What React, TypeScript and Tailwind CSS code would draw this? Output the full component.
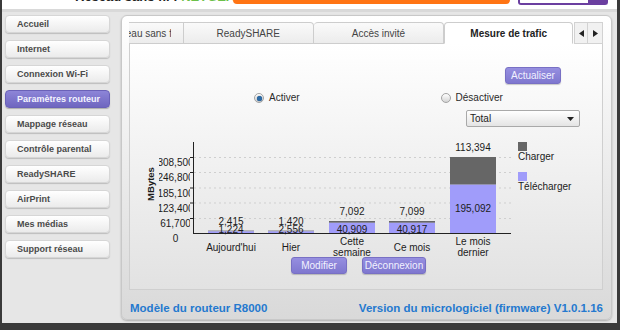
import React from 'react'

const MENU = [
  'Accueil',
  'Internet',
  'Connexion Wi-Fi',
  'Paramètres routeur',
  'Mappage réseau',
  'Contrôle parental',
  'ReadySHARE',
  'AirPrint',
  'Mes médias',
  'Support réseau',
]

// y-axis ticks (page coords), 15px per 61,700
const TICKS = [
  { y: 157.5, label: '308,500' },
  { y: 172.5, label: '246,800' },
  { y: 188, label: '185,100' },
  { y: 203, label: '123,400' },
  { y: 218.5, label: '61,700' },
]

const BARS = [
  { x: 208, up: 0.8, down: 1.6, upLabel: '2,415', downLabel: '1,224', upY: 225, downY: 232.5, cat: ["Aujourd'hui"] },
  { x: 268, up: 0.8, down: 1.6, upLabel: '1,420', downLabel: '2,556', upY: 225, downY: 232.5, cat: ['Hier'] },
  { x: 329, up: 1.8, down: 10.2, upLabel: '7,092', downLabel: '40,909', upY: 215, downY: 233, cat: ['Cette', 'semaine'] },
  { x: 389, up: 1.8, down: 10.2, upLabel: '7,099', downLabel: '40,917', upY: 215, downY: 233, cat: ['Ce mois'] },
  { x: 450, up: 27.7, down: 48.3, upLabel: '113,394', downLabel: '195,092', upY: 151, downY: 212, cat: ['Le mois', 'dernier'] },
]

function Chart() {
  return (
    <svg width="472" height="122" className="block" style={{ fontFamily: '"Liberation Sans", Arial, sans-serif' }}>
      <defs>
        <clipPath id="ylabels">
          <rect x="159" y="140" width="31" height="110" />
        </clipPath>
      </defs>
      <g transform="translate(-130,-135)" fontSize="10" fill="#1c1c1c">
        {/* grid */}
        {TICKS.map((t) => (
          <line key={t.y} x1="194" x2="511" y1={t.y} y2={t.y} stroke="#cfcfcf" strokeDasharray="2 3" />
        ))}
        {/* axes */}
        <line x1="193.5" x2="193.5" y1="142" y2="233.5" stroke="#222" />
        <line x1="193" x2="511" y1="233.5" y2="233.5" stroke="#222" />
        {TICKS.map((t) => (
          <line key={'t' + t.y} x1="190" x2="193" y1={t.y} y2={t.y} stroke="#222" />
        ))}
        <g clipPath="url(#ylabels)">
          {TICKS.map((t) => (
            <text key={'l' + t.y} x="175.5" y={t.y + 8.5} textAnchor="middle">
              {t.label}
            </text>
          ))}
        </g>
        <text x="175.5" y="242" textAnchor="middle">0</text>
        <text transform="translate(154,184) rotate(-90)" textAnchor="middle" fontWeight="bold" fontSize="9.5">
          MBytes
        </text>

        {/* bars */}
        {BARS.map((b) => {
          const downTop = 233 - b.down
          const upTop = downTop - b.up
          const cx = b.x + 23
          return (
            <g key={b.x}>
              <rect x={b.x} y={upTop} width="46" height={b.up} fill="#666666" />
              <rect x={b.x} y={downTop} width="46" height={b.down} fill="#a09cfa" />
              <text x={cx} y={b.upY} textAnchor="middle">{b.upLabel}</text>
              <text x={cx} y={b.downY} textAnchor="middle">{b.downLabel}</text>
              {b.cat.length === 1 ? (
                <text x={cx} y="251" textAnchor="middle">{b.cat[0]}</text>
              ) : (
                <>
                  <text x={cx} y="244.5" textAnchor="middle">{b.cat[0]}</text>
                  <text x={cx} y="256" textAnchor="middle">{b.cat[1]}</text>
                </>
              )}
            </g>
          )
        })}

        {/* legend */}
        <rect x="518" y="142" width="9" height="9" fill="#666666" />
        <text x="518" y="159.5">Charger</text>
        <rect x="518" y="172" width="9" height="9" fill="#a09cfa" />
        <text x="518" y="189.5">Télécharger</text>
      </g>
    </svg>
  )
}

function Radio({ checked, label }: { checked?: boolean; label: string }) {
  return (
    <div className="flex items-center gap-[5px]">
      <div className="w-[10px] h-[10px] rounded-full border border-[#a3a3a3] bg-gradient-to-b from-white to-[#d4d4d4] flex items-center justify-center">
        {checked && <div className="w-[5px] h-[5px] rounded-full bg-[#2b6aa6] shadow-[0_0_1px_#0d3a66]" />}
      </div>
      <span className="text-[10px] leading-[10px] text-[#2a2a2a]">{label}</span>
    </div>
  )
}

function PurpleButton({ label, width }: { label: string; width: string }) {
  return (
    <div
      className={`${width} h-[17px] rounded-[3px] border border-[#7870c4] bg-gradient-to-b from-[#968fe0] to-[#7f77cf] text-[10px] leading-[15px] text-center text-[#f2f2ff] shadow-[0_1px_1px_rgba(0,0,0,0.2)]`}
    >
      {label}
    </div>
  )
}

export default function App() {
  return (
    <div className="w-[620px] h-[330px] bg-[#3a3a3a] overflow-hidden font-['Liberation_Sans',Arial,sans-serif]">
      <div className="ml-[2px] mr-[3px] h-[323px] flex flex-col bg-[#e6e6e6]">
        {/* top strip, mostly scrolled out of view */}
        <div className="h-[9px] bg-white flex items-start overflow-hidden shrink-0">
          <div className="w-[231px] pl-[73px] mt-[-10px] text-[13px] leading-[13px] font-bold whitespace-nowrap overflow-hidden">
            <span className="text-[#222]">Réseau sans fil : </span>
            <span className="text-[#6cc04a]">NETGEAR</span>
          </div>
          <div className="w-[277px] h-[4px] rounded-b-[6px] bg-[#ff7414]" />
          <div className="ml-[8px] w-[90px] h-[5px] rounded-b-[3px] border-2 border-t-0 border-[#6b3fa0] bg-white flex justify-end">
            <div className="w-[18px] bg-[#6b3fa0]" />
          </div>
        </div>

        <div className="flex-1 flex border-t-[3px] border-[#d9d9d9] pt-[3px]">
          {/* sidebar */}
          <div className="w-[119px] pl-[3px] pr-[11px] flex flex-col gap-[7px]">
            {MENU.map((item) => {
              const active = item === 'Paramètres routeur'
              return (
                <div
                  key={item}
                  className={
                    active
                      ? 'h-[18px] rounded-[4px] border border-[#6a61b8] bg-gradient-to-b from-[#8d85d8] to-[#6f66c0] pl-[11px] text-[9px] leading-[16px] font-bold text-[#f4f4ff] shadow-[0_1px_1px_rgba(0,0,0,0.25)]'
                      : 'h-[18px] rounded-[4px] border border-[#d6d6d6] bg-gradient-to-b from-white to-[#ebebeb] pl-[11px] text-[9px] leading-[16px] font-bold text-[#4a4a4a] shadow-[0_1px_1px_rgba(0,0,0,0.18)]'
                  }
                >
                  {item}
                </div>
              )
            })}
          </div>

          {/* main panel */}
          <div className="w-[491px] h-[305px] rounded-[6px] border border-[#c8c8c8] bg-gradient-to-b from-white to-[#d9d9d9] shadow-[0_1px_2px_rgba(0,0,0,0.25)] pt-[6px] pl-[7px] pr-[8px] flex flex-col">
            {/* tabs */}
            <div className="h-[22px] flex shrink-0">
              <div className="w-[55px] border border-[#cdcdcd] border-l-0 bg-gradient-to-b from-[#fafafa] to-[#ececec] flex items-center overflow-hidden">
                <div className="w-[42px] overflow-hidden">
                  <div className="ml-[-21px] text-[10px] text-[#444] whitespace-nowrap">Réseau sans fil</div>
                </div>
              </div>
              <div className="w-[130px] border border-l-0 border-[#cdcdcd] rounded-tr-[4px] bg-gradient-to-b from-[#fafafa] to-[#ececec] flex items-center justify-center text-[10px] text-[#444]">
                ReadySHARE
              </div>
              <div className="w-[131px] border border-l-0 border-[#cdcdcd] rounded-t-[4px] bg-gradient-to-b from-[#fafafa] to-[#ececec] flex items-center justify-center text-[10px] text-[#444]">
                Accès invité
              </div>
              <div className="w-[129px] border border-[#cdcdcd] border-b-white rounded-t-[4px] bg-white flex items-center justify-center text-[10px] font-bold text-[#222]">
                Mesure de trafic
              </div>
              <div className="w-[14px] ml-[1px] border border-[#d2d2d2] bg-[#f1f1f1] flex items-center justify-center">
                <svg width="5" height="7" viewBox="0 0 5 7"><path d="M5 0 L0 3.5 L5 7 Z" fill="#222" /></svg>
              </div>
              <div className="w-[15px] border border-l-0 border-[#d2d2d2] bg-[#f1f1f1] flex items-center justify-center">
                <svg width="5" height="7" viewBox="0 0 5 7"><path d="M0 0 L5 3.5 L0 7 Z" fill="#222" /></svg>
              </div>
            </div>

            {/* tab content */}
            <div className="h-[246px] border border-t-0 border-[#cfcfcf] bg-gradient-to-b from-white to-[#e2e2e2] flex flex-col shrink-0">
              <div className="mt-[23px] flex justify-end pr-[41px]">
                <PurpleButton label="Actualiser" width="w-[56px]" />
              </div>
              <div className="mt-[9px] h-[10px] flex pl-[124px]">
                <Radio checked label="Activer" />
                <div className="ml-[141px]">
                  <Radio label="Désactiver" />
                </div>
              </div>
              <div className="mt-[7px] flex justify-end pr-[22px]">
                <div className="w-[114px] h-[17px] rounded-[2px] border border-[#a9a9a9] bg-gradient-to-b from-white to-[#e4e4e4] flex items-center justify-between pl-[3px] pr-[5px]">
                  <span className="text-[10px] text-[#222]">Total</span>
                  <svg width="7" height="4" viewBox="0 0 7 4"><path d="M0 0 L7 0 L3.5 4 Z" fill="#222" /></svg>
                </div>
              </div>
              <div className="mt-[8px]">
                <Chart />
              </div>
              <div className="flex pl-[161px] gap-[15px]">
                <PurpleButton label="Modifier" width="w-[56px]" />
                <PurpleButton label="Déconnexion" width="w-[64px]" />
              </div>
            </div>

            {/* footer */}
            <div className="flex-1 flex items-center justify-between pl-[1px] pt-[8px] text-[11.5px] font-bold text-[#2479cf]">
              <span>Modèle du routeur R8000</span>
              <span>Version du micrologiciel (firmware) V1.0.1.16</span>
            </div>
          </div>
        </div>
      </div>
    </div>
  )
}
